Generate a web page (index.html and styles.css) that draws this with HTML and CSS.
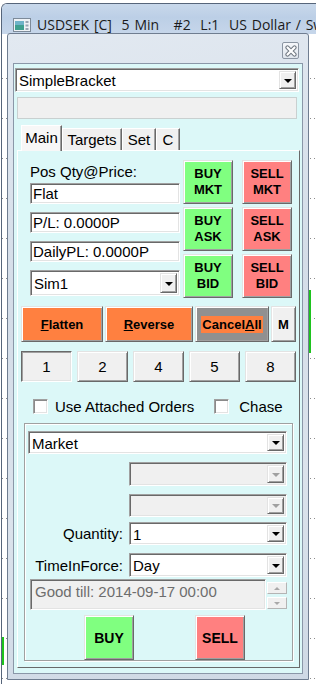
FILE: index.html
```html
<!DOCTYPE html>
<html lang="en">
<head>
    <meta charset="UTF-8">
    <title>Chart Trader</title>
    <link rel="stylesheet" href="styles.css">
</head>
<body>
    <div class="chart-window">
        <div class="titlebar">
            <svg class="app-icon" width="18" height="14" viewBox="0 0 18 14">
                <rect x="0.5" y="0.5" width="17" height="13" fill="#eef2f6" stroke="#7d8a99"/>
                <rect x="2" y="3" width="9" height="9" fill="#3f9f8f"/>
                <rect x="2" y="3" width="9" height="4" fill="#6fb3c8"/>
                <rect x="12.5" y="3" width="3" height="2" fill="#9aa6b3"/>
                <rect x="12.5" y="6.5" width="3" height="2" fill="#9aa6b3"/>
                <rect x="12.5" y="10" width="3" height="2" fill="#9aa6b3"/>
            </svg>
            <span class="title">USDSEK [C]  5 Min   #2  L:1  US Dollar / Swedish Krona</span>
        </div>
        <div class="chart">
            <div class="bar bar-a"></div>
            <div class="bar bar-b"></div>
        </div>
    </div>

    <div class="dialog">
        <div class="dialog-head">
            <button class="close-x">
                <svg width="12" height="12" viewBox="0 0 12 12">
                    <path d="M2.5 2.5 L9.5 9.5 M9.5 2.5 L2.5 9.5" stroke="#6f7780" stroke-width="4.2" stroke-linecap="round"/>
                    <path d="M2.5 2.5 L9.5 9.5 M9.5 2.5 L2.5 9.5" stroke="#ffffff" stroke-width="2.2" stroke-linecap="round"/>
                </svg>
            </button>
        </div>

        <div class="client">
            <div class="combo strategy">
                <span class="combo-text">SimpleBracket</span>
                <span class="drop"><i class="tri"></i></span>
            </div>
            <div class="status-box"></div>

            <div class="tabs">
                <div class="tab active tab-main">Main</div>
                <div class="tab tab-targets">Targets</div>
                <div class="tab tab-set">Set</div>
                <div class="tab tab-c">C</div>
            </div>

            <div class="tab-panel">
                <div class="top-grid">
                    <div class="fields">
                        <div class="field-label">Pos Qty@Price:</div>
                        <div class="textbox">Flat</div>
                        <div class="textbox">P/L: 0.0000P</div>
                        <div class="textbox">DailyPL: 0.0000P</div>
                        <div class="combo account">
                            <span class="combo-text">Sim1</span>
                            <span class="drop"><i class="tri"></i></span>
                        </div>
                    </div>
                    <div class="btn-col">
                        <button class="raised trade buy">BUY<br>MKT</button>
                        <button class="raised trade buy">BUY<br>ASK</button>
                        <button class="raised trade buy">BUY<br>BID</button>
                    </div>
                    <div class="btn-col sell-col">
                        <button class="raised trade sell">SELL<br>MKT</button>
                        <button class="raised trade sell">SELL<br>ASK</button>
                        <button class="raised trade sell">SELL<br>BID</button>
                    </div>
                </div>

                <div class="action-row">
                    <button class="raised action flatten"><u>F</u>latten</button>
                    <button class="raised action reverse"><u>R</u>everse</button>
                    <button class="raised action cancel-all"><span class="hilite">Cancel<u>A</u>ll</span></button>
                    <button class="raised action m-btn">M</button>
                </div>

                <div class="qty-row">
                    <button class="raised qty pressed">1</button>
                    <button class="raised qty">2</button>
                    <button class="raised qty">4</button>
                    <button class="raised qty">5</button>
                    <button class="raised qty">8</button>
                </div>

                <div class="check-row">
                    <label class="check-item"><span class="checkbox"></span>Use Attached Orders</label>
                    <label class="check-item chase"><span class="checkbox"></span>Chase</label>
                </div>

                <div class="order-group">
                    <div class="combo order-type">
                        <span class="combo-text">Market</span>
                        <span class="drop"><i class="tri"></i></span>
                    </div>

                    <div class="form-row row-price1">
                        <span class="form-label"></span>
                        <div class="combo disabled">
                            <span class="combo-text"></span>
                            <span class="drop"><i class="tri"></i></span>
                        </div>
                    </div>
                    <div class="form-row row-price2">
                        <span class="form-label"></span>
                        <div class="combo disabled">
                            <span class="combo-text"></span>
                            <span class="drop"><i class="tri"></i></span>
                        </div>
                    </div>
                    <div class="form-row row-qty">
                        <span class="form-label">Quantity:</span>
                        <div class="combo">
                            <span class="combo-text">1</span>
                            <span class="drop"><i class="tri"></i></span>
                        </div>
                    </div>
                    <div class="form-row row-tif">
                        <span class="form-label">TimeInForce:</span>
                        <div class="combo">
                            <span class="combo-text">Day</span>
                            <span class="drop"><i class="tri"></i></span>
                        </div>
                    </div>

                    <div class="good-till">
                        <div class="gt-box">Good till: 2014-09-17 00:00</div>
                        <div class="spin">
                            <span class="spin-btn"><i class="tri-up"></i></span>
                            <span class="spin-btn"><i class="tri-down"></i></span>
                        </div>
                    </div>

                    <div class="submit-row">
                        <button class="raised trade buy single">BUY</button>
                        <button class="raised trade sell single">SELL</button>
                    </div>
                </div>
            </div>
        </div>
    </div>
</body>
</html>
```

FILE: styles.css
```css
body {
    margin: 0;
    width: 316px;
    height: 684px;
    overflow: hidden;
    position: relative;
    background: #fff;
    font-family: "Liberation Sans", Arial, sans-serif;
    font-size: 15px;
    color: #000;
}

/* chart window behind the dialog */
.chart-window {
    margin: 3px 0 0 1px;
    height: 681px;
    border-top: 1px solid #56657a;
    border-left: 1px solid #56657a;
    border-radius: 6px 0 0 0;
    display: flex;
    flex-direction: column;
    overflow: hidden;
}
.titlebar {
    height: 30px;
    flex: none;
    display: flex;
    align-items: center;
    gap: 6px;
    padding: 11px 0 0 11px;
    box-sizing: border-box;
    background: linear-gradient(180deg, #c8d8eb 0%, #bccfe6 45%, #c6d6ea 100%);
    white-space: nowrap;
    overflow: hidden;
}
.app-icon {
    flex: none;
}
.title {
    font-family: "Open Sans", "Liberation Sans", sans-serif;
    font-size: 14px;
    word-spacing: 1.2px;
    color: #1b1b1b;
    white-space: pre;
}
.chart {
    flex: 1;
    position: relative;
    background:
        repeating-linear-gradient(90deg, transparent 0 1px, #fff 1px 4px),
        repeating-linear-gradient(180deg, transparent 0 39px, #8c8c8c 39px 40px) 0 5px,
        #fff;
}
.bar {
    position: absolute;
    width: 2px;
    background: #1ec31e;
}
.bar-a {
    left: 307px;
    top: 256px;
    height: 63px;
}
.bar-b {
    left: -1px;
    top: 603px;
    height: 28px;
    width: 3px;
}

/* floating order dialog */
.dialog {
    position: absolute;
    left: 7px;
    top: 33px;
    width: 302px;
    height: 647px;
    box-sizing: border-box;
    border: 1px solid #6f7d90;
    border-radius: 3px 3px 0 0;
    background: linear-gradient(170deg, #e2e9f1 0%, #d4dde8 40%, #dbe3ec 70%, #cfd9e5 100%);
    padding: 0 5px 5px;
    display: flex;
    flex-direction: column;
}
.dialog-head {
    height: 29px;
    flex: none;
    display: flex;
    justify-content: flex-end;
    align-items: flex-start;
}
.close-x {
    margin: 8px 4px 0 0;
    width: 17px;
    height: 17px;
    padding: 0;
    border: 1px solid #8b95a2;
    border-radius: 2px;
    background: linear-gradient(#f5f7fa, #dfe5ec);
    display: flex;
    align-items: center;
    justify-content: center;
}
.client {
    flex: 1;
    border: 1px solid #8a97a8;
    background: #dcf8f8;
    padding-top: 4px;
    display: flex;
    flex-direction: column;
}

/* classic 3D look */
.raised {
    box-sizing: border-box;
    border: 1px solid;
    border-color: #e3e3e3 #696969 #696969 #e3e3e3;
    box-shadow: inset 1px 1px #fff, inset -1px -1px #a0a0a0;
    background: #f0f0f0;
    padding: 0;
    font-family: inherit;
    color: #000;
}
.raised.pressed {
    border-color: #696969 #fff #fff #696969;
    box-shadow: inset 1px 1px #a0a0a0, inset -1px -1px #e3e3e3;
}
.combo,
.textbox,
.gt-box {
    box-sizing: border-box;
    border: 1px solid;
    border-color: #a0a0a0 #fff #fff #a0a0a0;
    box-shadow: inset 1px 1px #696969, inset -1px -1px #e3e3e3;
    background: #fff;
}

.combo {
    height: 24px;
    display: flex;
    align-items: stretch;
    padding: 2px;
}
.combo-text {
    flex: 1;
    padding-left: 1px;
    line-height: 19px;
    white-space: nowrap;
}
.drop {
    width: 17px;
    box-sizing: border-box;
    border: 1px solid;
    border-color: #e3e3e3 #696969 #696969 #e3e3e3;
    box-shadow: inset 1px 1px #fff, inset -1px -1px #a0a0a0;
    background: #f0f0f0;
    display: flex;
    align-items: center;
    justify-content: center;
}
.tri {
    width: 0;
    height: 0;
    border-left: 4px solid transparent;
    border-right: 4px solid transparent;
    border-top: 4px solid #000;
    margin-top: 1px;
}
.combo.disabled {
    background: #f0f0f0;
}
.combo.disabled .tri {
    border-top-color: #a0a0a0;
}

.strategy {
    margin-left: 1px;
    width: 284px;
}
.status-box {
    margin: 5px 5px 0 3px;
    height: 22px;
    box-sizing: border-box;
    border: 1px solid #c9d0d0;
    background: #f0f0f0;
}

/* tabs */
.tabs {
    margin-top: 6px;
    padding-left: 7px;
    height: 25px;
    display: flex;
    align-items: flex-end;
    position: relative;
    z-index: 1;
}
.tab {
    height: 22px;
    box-sizing: border-box;
    border: 1px solid;
    border-bottom: none;
    border-color: #fff #696969 transparent #fff;
    box-shadow: inset -1px 0 #a0a0a0;
    background: #f0f0f0;
    text-align: center;
    line-height: 22px;
}
.tab.active {
    height: 26px;
    margin-bottom: -1px;
    background: #f7f7f7;
    line-height: 24px;
}
.tab-main { width: 41px; }
.tab-targets { width: 60px; }
.tab-set { width: 34px; }
.tab-c { width: 24px; }

.tab-panel {
    flex: 1;
    margin: 0 2px 5px 3px;
    box-sizing: border-box;
    border: 1px solid;
    border-color: #fff #696969 #696969 #fff;
    padding: 9px 3px 0;
}

.top-grid {
    display: flex;
    padding-left: 9px;
}
.fields {
    width: 150px;
    display: flex;
    flex-direction: column;
}
.field-label {
    padding-top: 3px;
    line-height: 17px;
    margin-bottom: 3px;
}
.textbox {
    height: 21px;
    line-height: 19px;
    padding: 0 2px;
    margin-bottom: 8px;
    white-space: nowrap;
}
.account {
    height: 26px;
}
.account .combo-text {
    line-height: 21px;
}
.btn-col {
    width: 50px;
    margin-left: 3px;
    display: flex;
    flex-direction: column;
    gap: 3px;
}
.sell-col {
    margin-left: 9px;
}
.trade {
    width: 50px;
    height: 44px;
    font-weight: bold;
    font-size: 13px;
    line-height: 16px;
}
.buy { background: #80ff80; }
.sell { background: #ff8080; }

.action-row {
    margin-top: 8px;
    display: flex;
    gap: 2px;
}
.action {
    height: 36px;
    font-weight: bold;
    font-size: 13px;
}
.flatten {
    width: 82px;
    background: #ff8040;
}
.reverse {
    width: 88px;
    background: #ff8040;
}
.cancel-all {
    width: 74px;
    background: #909090;
}
.hilite {
    background: #ff8040;
    padding: 1px 1px;
}
.m-btn {
    width: 25px;
}

.qty-row {
    margin-top: 9px;
    display: flex;
    justify-content: space-between;
}
.qty {
    width: 51px;
    height: 31px;
    font-size: 15px;
}

.check-row {
    margin-top: 15px;
    height: 19px;
    display: flex;
    align-items: center;
    padding-left: 12px;
}
.check-item {
    display: flex;
    align-items: center;
    gap: 7px;
}
.checkbox {
    width: 15px;
    height: 15px;
    box-sizing: border-box;
    border: 1px solid;
    border-color: #a0a0a0 #fff #fff #a0a0a0;
    box-shadow: inset 1px 1px #8a8a8a, inset -1px -1px #e3e3e3;
    background: #fff;
}
.chase {
    margin-left: 20px;
    gap: 10px;
}

.order-group {
    margin: 7px 3px 0;
    border: 1px solid #a0a0a0;
    box-shadow: inset 1px 1px #fff, 1px 1px #fff;
    padding: 7px 5px 0 3px;
}
.order-type {
    height: 23px;
}
.form-row {
    display: grid;
    grid-template-columns: 95px 158px;
    column-gap: 6px;
    align-items: center;
}
.form-label {
    text-align: right;
    white-space: nowrap;
}
.row-price1 {
    margin-top: 8px;
}
.row-price2 {
    margin-top: 8px;
}
.row-price2 .combo,
.row-qty .combo {
    height: 23px;
}
.row-qty {
    margin-top: 5px;
}
.row-tif {
    margin-top: 8px;
}

.good-till {
    margin: 2px 0 0 2px;
    display: flex;
}
.gt-box {
    width: 236px;
    height: 31px;
    background: #f0f0f0;
    color: #6d6d6d;
    padding: 2px 0 0 4px;
    line-height: 20px;
    white-space: nowrap;
}
.spin {
    width: 20px;
    margin-left: 1px;
    padding-top: 3px;
    display: flex;
    flex-direction: column;
    gap: 3px;
}
.spin-btn {
    height: 12px;
    box-sizing: border-box;
    border: 1px solid;
    border-color: #fff #b4b4b4 #b4b4b4 #fff;
    background: #f0f0f0;
    display: flex;
    align-items: center;
    justify-content: center;
}
.tri-up,
.tri-down {
    width: 0;
    height: 0;
    border-left: 3px solid transparent;
    border-right: 3px solid transparent;
}
.tri-up {
    border-bottom: 3px solid #a8a8a8;
}
.tri-down {
    border-top: 3px solid #a8a8a8;
}

.submit-row {
    margin-top: 5px;
    display: flex;
    padding-left: 56px;
    gap: 61px;
}
.trade.single {
    height: 45px;
    font-size: 14px;
}
```
